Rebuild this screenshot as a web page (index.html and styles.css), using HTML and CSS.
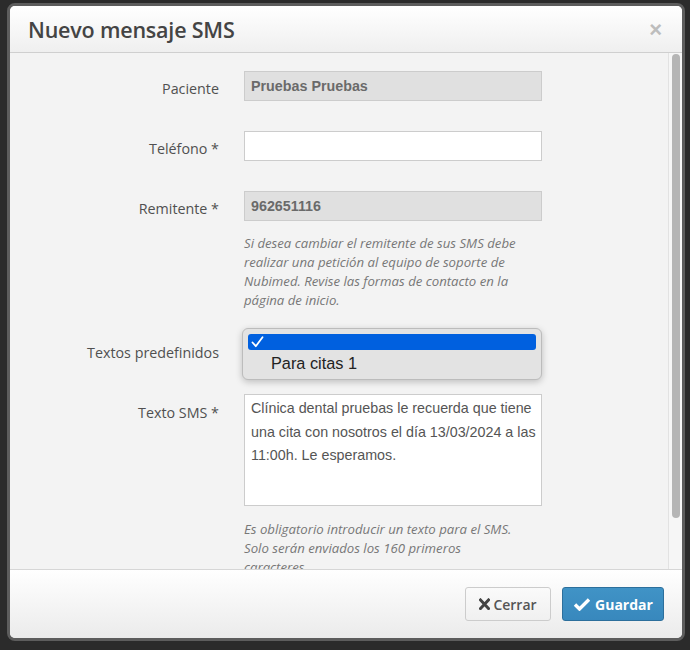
FILE: index.html
```html
<!DOCTYPE html>
<html lang="es">
<head>
<meta charset="utf-8">
<title>Nuevo mensaje SMS</title>
<link rel="stylesheet" href="styles.css">
</head>
<body>
<div class="modal">
  <div class="modal-header">
    <h3 class="modal-title">Nuevo mensaje SMS</h3>
    <span class="close">&times;</span>
  </div>
  <div class="modal-body">
    <div class="form">
      <div class="group g-paciente">
        <label class="lbl">Paciente</label>
        <div class="field">
          <div class="input disabled">Pruebas Pruebas</div>
        </div>
      </div>
      <div class="group g-gap">
        <label class="lbl">Teléfono *</label>
        <div class="field">
          <div class="input"></div>
        </div>
      </div>
      <div class="group g-gap">
        <label class="lbl">Remitente *</label>
        <div class="field">
          <div class="input disabled">962651116</div>
          <p class="help">Si desea cambiar el remitente de sus SMS debe<br>realizar una petición al equipo de soporte de<br>Nubimed. Revise las formas de contacto en la<br>página de inicio.</p>
        </div>
      </div>
      <div class="group g-select">
        <label class="lbl lbl-select">Textos predefinidos</label>
        <div class="field">
          <div class="popup">
            <div class="opt selected">
              <svg class="tick" width="13" height="12" viewBox="0 0 13 12"><path d="M1.5 6.5 L4.8 10.2 L11.5 1.2" fill="none" stroke="#fff" stroke-width="1.8" stroke-linecap="round" stroke-linejoin="round"/></svg>
            </div>
            <div class="opt">Para citas 1</div>
          </div>
        </div>
      </div>
      <div class="group g-text">
        <label class="lbl lbl-top">Texto SMS *</label>
        <div class="field">
          <div class="textarea">Clínica dental pruebas le recuerda que tiene<br>una cita con nosotros el día 13/03/2024 a las<br>11:00h. Le esperamos.</div>
          <p class="help">Es obligatorio introducir un texto para el SMS.<br>Solo serán enviados los 160 primeros<br>caracteres</p>
        </div>
      </div>
    </div>
    <div class="scroll-track"><div class="scroll-thumb"></div></div>
  </div>
  <div class="modal-footer">
    <button class="btn btn-default">
      <svg width="11" height="12" viewBox="0 0 11 12"><path d="M1.5 2 L9.5 10.5 M9.5 2 L1.5 10.5" stroke="#444" stroke-width="3" stroke-linecap="square"/></svg>
      <span>Cerrar</span>
    </button>
    <button class="btn btn-primary">
      <svg width="18" height="14" viewBox="0 0 18 14"><path d="M2 7.5 L6.5 12 L16 2.5" fill="none" stroke="#fff" stroke-width="3.4" stroke-linejoin="miter" stroke-linecap="butt"/></svg>
      <span>Guardar</span>
    </button>
  </div>
</div>
</body>
</html>
```
FILE: styles.css
```css
html, body {
  margin: 0;
  padding: 0;
}
body {
  background: #2b2b2b;
  width: 690px;
  height: 650px;
  overflow: hidden;
  font-family: "Open Sans", "Liberation Sans", sans-serif;
}
.modal {
  margin: 3px 0 0 7px;
  width: 672px;
  border: 3px solid #5d5d5d;
  border-radius: 8px;
  overflow: hidden;
  background: #f3f3f3;
  display: flex;
  flex-direction: column;
}
.modal-header {
  height: 46px;
  border-bottom: 1px solid #cfcfcf;
  background: linear-gradient(#ffffff, #efefef);
  display: flex;
  align-items: center;
  justify-content: space-between;
  padding: 0 20px 0 18px;
}
.modal-title {
  margin: 0;
  font-size: 21.5px;
  font-weight: 600;
  color: #444;
  letter-spacing: -0.2px;
}
.close {
  font-family: "Liberation Sans", sans-serif;
  font-size: 22px;
  font-weight: bold;
  color: #bdbdbd;
  line-height: 1;
  margin-top: 2px;
}
.modal-body {
  height: 516px;
  display: flex;
  overflow: hidden;
}
.form {
  flex: 1;
  padding-top: 18px;
}
.group {
  display: flex;
  align-items: flex-start;
  gap: 25px;
}
.g-gap { margin-top: 30px; }
.g-select { margin-top: 18px; }
.g-text { margin-top: 14px; }
.lbl {
  width: 209px;
  flex: none;
  text-align: right;
  font-size: 14.3px;
  color: #505050;
  line-height: 24px;
  padding-top: 6px;
  box-sizing: border-box;
}
.lbl-select { padding-top: 13px; }
.lbl-top { padding-top: 7px; }
.field {
  width: 298px;
  flex: none;
}
.input {
  height: 30px;
  box-sizing: border-box;
  border: 1px solid #cccccc;
  background: #ffffff;
  padding: 0 6px;
  font-family: "Liberation Sans", Arial, sans-serif;
  font-size: 14.3px;
  line-height: 28px;
  color: #666;
}
.input.disabled {
  background: #e0e0e0;
  font-weight: bold;
  color: #6a6a6a;
}
.help {
  margin: 13px 0 0;
  font-size: 13.2px;
  font-style: italic;
  line-height: 19px;
  color: #777;
  white-space: nowrap;
}
.g-text .help { margin-top: 14px; }
.popup {
  width: 300px;
  height: 52px;
  margin-left: -2px;
  box-sizing: border-box;
  background: #e3e3e3;
  border: 1px solid #bcbcbc;
  border-radius: 6px;
  box-shadow: 0 2px 7px rgba(0, 0, 0, 0.22);
  padding: 5px 5px 0;
}
.opt {
  height: 16px;
  font-family: "Liberation Sans", Arial, sans-serif;
  font-size: 16.3px;
  color: #222;
  line-height: 26px;
  padding-left: 23px;
}
.opt.selected {
  background: #0060df;
  border-radius: 3px;
  padding-left: 3px;
  display: flex;
  align-items: center;
}
.tick { display: block; }
.textarea {
  height: 112px;
  box-sizing: border-box;
  border: 1px solid #cccccc;
  background: #fff;
  padding: 2px 6px;
  font-family: "Liberation Sans", Arial, sans-serif;
  font-size: 14.3px;
  line-height: 23.5px;
  color: #555;
  white-space: nowrap;
}
.scroll-track {
  border-left: 1px solid #e2e2e2;
  background: #f6f6f6;
  flex: none;
  padding: 1px 0 0 3px;
  box-sizing: border-box;
  width: 14px;
}
.scroll-thumb {
  width: 8px;
  height: 464px;
  background: #b5b5b5;
  border-radius: 4px;
}
.modal-footer {
  height: 69px;
  border-top: 1px solid #d6d6d6;
  background: linear-gradient(#ffffff, #ebebeb);
  display: flex;
  justify-content: flex-end;
  align-items: flex-start;
  gap: 11px;
  padding: 17px 18px 0 0;
  box-sizing: border-box;
}
.btn {
  height: 34px;
  box-sizing: border-box;
  border-radius: 3px;
  display: flex;
  align-items: center;
  justify-content: center;
  gap: 3px;
  font-family: "Open Sans", sans-serif;
  font-size: 14px;
  padding: 0;
  margin: 0;
}
.btn-default {
  width: 86px;
  background: linear-gradient(#fafafa, #f0f0f0);
  border: 1px solid #cccccc;
  color: #555;
  font-weight: 600;
}
.btn-primary {
  width: 102px;
  background: linear-gradient(#4093c6, #3888bd);
  border: 1px solid #2c6f9c;
  color: #fff;
  font-weight: 700;
  gap: 4px;
}
```
